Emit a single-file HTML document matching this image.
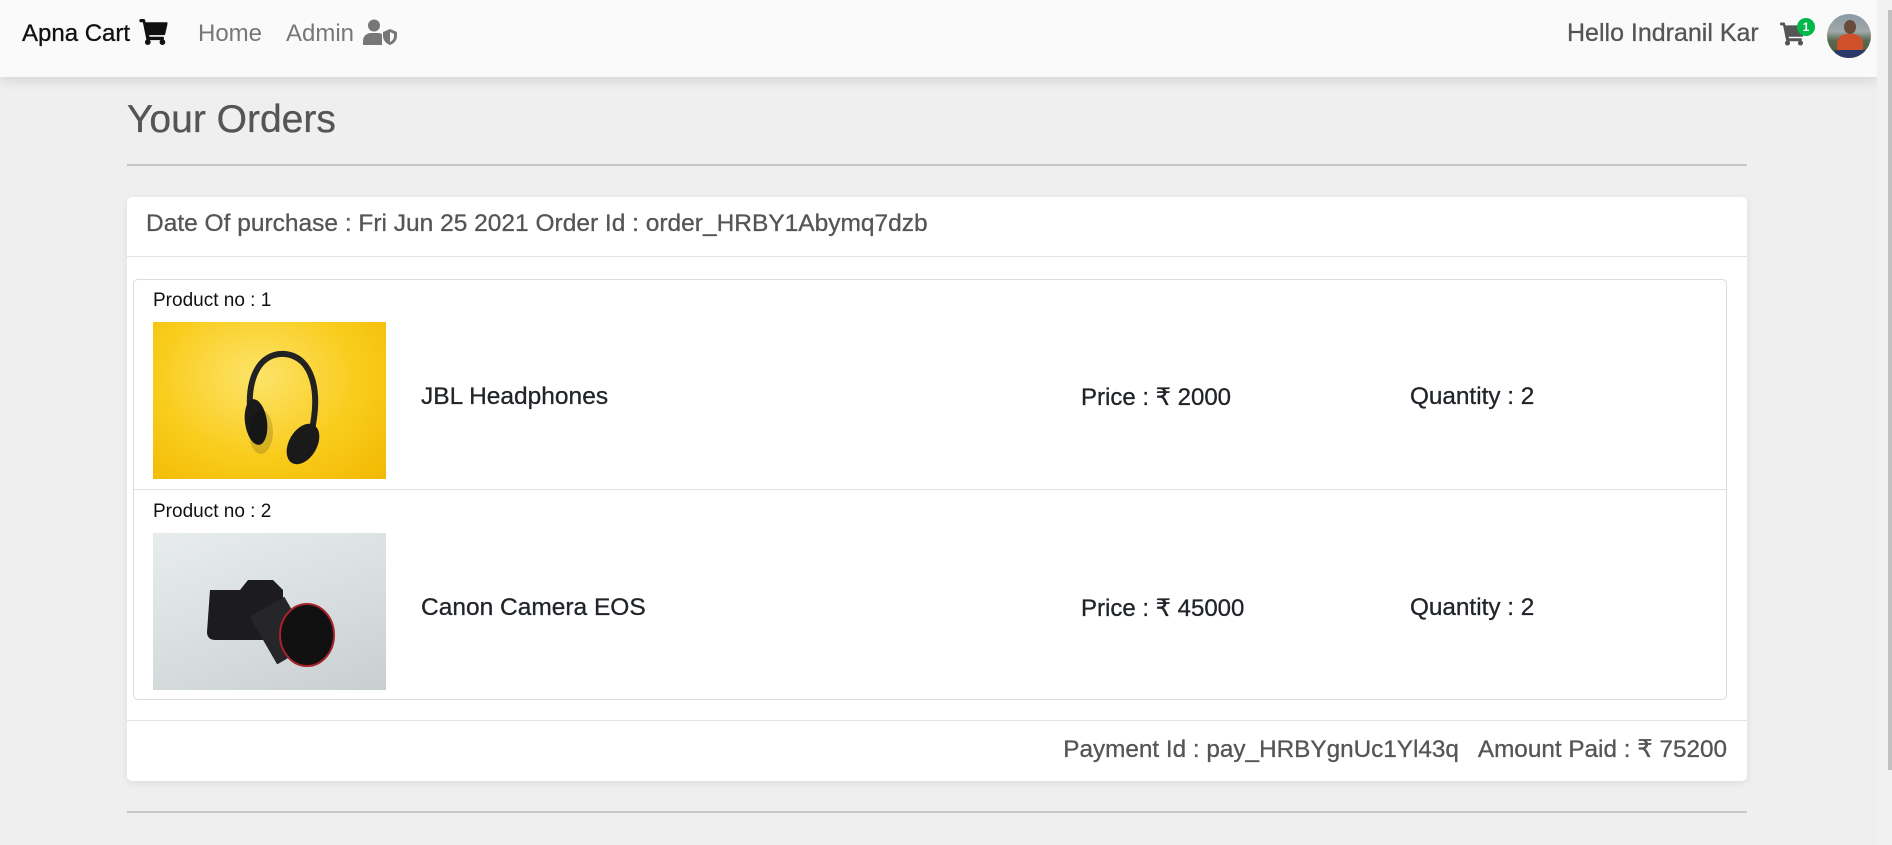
<!DOCTYPE html>
<html><head><meta charset="utf-8"><style>
*{margin:0;padding:0;box-sizing:border-box}
body{width:1892px;height:845px;background:#efefef;font-family:"Liberation Sans","DejaVu Sans",sans-serif;position:relative;overflow:hidden}
.a{position:absolute;white-space:nowrap}
.nav{position:absolute;left:0;top:0;width:1877px;height:77px;background:#fafafa;box-shadow:0 3px 12px rgba(0,0,0,.12)}
.sb{position:absolute;left:1877px;top:0;width:15px;height:845px;background:#f1f1f1}
.sb div{position:absolute;left:11px;top:10px;width:4px;height:760px;background:#c1c1c1}
.card{position:absolute;left:127px;top:197px;width:1620px;height:584px;background:#fff;border-radius:5px;box-shadow:0 2px 8px rgba(0,0,0,.08)}
.t{color:#212529;font-size:24.5px;-webkit-text-stroke:.3px #212529}
.g{color:#555;-webkit-text-stroke:.3px #555}
</style></head><body>
<div class="nav">
 <div class="a" style="left:22px;top:20px;font-size:24px;color:#111;-webkit-text-stroke:.3px #111">Apna Cart</div>
 <svg class="a" style="left:139px;top:19px" width="30" height="26" viewBox="0 0 576 512"><path fill="#111" d="M528 64H122L112 20C109 8 99 0 87 0H24C11 0 0 11 0 24v16c0 13 11 24 24 24h44l70 343c-17 10-28 28-28 49 0 31 25 56 56 56s56-25 56-56c0-15-6-29-17-39h210c-10 10-17 24-17 39 0 31 25 56 56 56s56-25 56-56c0-22-13-41-31-50l6-27c3-15-8-29-23-29H199l-7-32h293c11 0 21-8 24-19l46-208c3-15-8-29-23-29z"/></svg>
 <div class="a" style="left:198px;top:20px;font-size:24px;color:#777">Home</div>
 <div class="a" style="left:286px;top:20px;font-size:24px;color:#777">Admin</div>
 <svg class="a" style="left:363px;top:19px" width="34" height="26" viewBox="0 0 34 26"><circle cx="11" cy="6.5" r="6" fill="#777"/><path d="M0 26v-4c0-5 4-8 8-8h7c2 0 3 .5 4 1v11z" fill="#777"/><path d="M20 13l7-3 7 3v4c0 5-4 8-7 9-3-1-7-4-7-9z" fill="#777"/><path d="M27 13v10c2-1 4-3 4-6v-2z" fill="#fafafa"/></svg>
 <div class="a" style="left:1567px;top:19px;font-size:25px;color:#555;-webkit-text-stroke:.3px #555">Hello Indranil Kar</div>
 <svg class="a" style="left:1780px;top:22px" width="26" height="24" viewBox="0 0 576 512"><path fill="#555" d="M528 64H122L112 20C109 8 99 0 87 0H24C11 0 0 11 0 24v16c0 13 11 24 24 24h44l70 343c-17 10-28 28-28 49 0 31 25 56 56 56s56-25 56-56c0-15-6-29-17-39h210c-10 10-17 24-17 39 0 31 25 56 56 56s56-25 56-56c0-22-13-41-31-50l6-27c3-15-8-29-23-29H199l-7-32h293c11 0 21-8 24-19l46-208c3-15-8-29-23-29z"/></svg>
 <div class="a" style="left:1797px;top:18px;width:18px;height:18px;border-radius:50%;background:#00b74a;color:#fff;font-size:12px;font-weight:bold;text-align:center;line-height:18px">1</div>
 <div class="a" style="left:1827px;top:14px;width:44px;height:44px;border-radius:50%;overflow:hidden;background:linear-gradient(#8a9aa8 0,#a0a8a8 40%,#5a6a50 60%,#4a5a40 100%)">
  <div class="a" style="left:17px;top:6px;width:12px;height:14px;border-radius:50%;background:#6a4a3a"></div>
  <div class="a" style="left:10px;top:20px;width:26px;height:24px;border-radius:10px 10px 0 0;background:#d0502a"></div>
  <div class="a" style="left:8px;top:36px;width:30px;height:10px;background:#2a3a6a"></div>
 </div>
</div>
<div class="sb"><div></div></div>
<div class="a g" style="left:127px;top:98px;font-size:39px">Your Orders</div>
<div class="a" style="left:127px;top:164px;width:1620px;height:2px;background:#c8c8c8"></div>
<div class="card">
 <div class="a g" style="left:19px;top:13px;font-size:24.5px">Date Of purchase : Fri Jun 25 2021 Order Id : order_HRBY1Abymq7dzb</div>
 <div class="a" style="left:0;top:59px;width:1620px;height:1px;background:#e2e2e2"></div>
 <div class="a" style="left:6px;top:82px;width:1594px;height:421px;border:1px solid #dcdcdc;border-radius:5px">
  <div class="a" style="left:0;top:209px;width:1592px;height:1px;background:#e2e2e2"></div>
 </div>
 <div class="a" style="left:26px;top:93px;font-size:19px;color:#111">Product no : 1</div>
 <div class="a" style="left:26px;top:125px;width:233px;height:157px;overflow:hidden;background:radial-gradient(ellipse at 45% 35%,#fde36a 0,#f9cc1c 55%,#f2b800 100%)">
  <svg width="233" height="157" viewBox="0 0 233 157"><path d="M100 108C90 60 105 30 132 32 160 35 168 70 158 112" fill="none" stroke="#222" stroke-width="6"/><ellipse cx="103" cy="100" rx="11" ry="23" fill="#1a1a1a" transform="rotate(-8 103 100)"/><ellipse cx="150" cy="122" rx="14" ry="22" fill="#1a1a1a" transform="rotate(30 150 122)"/><ellipse cx="108" cy="110" rx="12" ry="22" fill="rgba(0,0,0,.15)"/></svg>
 </div>
 <div class="a t" style="left:294px;top:186px">JBL Headphones</div>
 <div class="a t" style="left:954px;top:186px;font-size:24px">Price : ₹ 2000</div>
 <div class="a t" style="left:1283px;top:186px;font-size:24.3px">Quantity : 2</div>
 <div class="a" style="left:26px;top:304px;font-size:19px;color:#111">Product no : 2</div>
 <div class="a" style="left:26px;top:336px;width:233px;height:157px;overflow:hidden;background:linear-gradient(160deg,#e8eced 0,#d6dcdd 60%,#c8cfd0 100%)">
  <svg width="233" height="157" viewBox="0 0 233 157"><path d="M57 57h30l8-10h25l10 10v50H62c-5 0-8-3-8-8z" fill="#1c1c1e"/><rect x="108" y="70" width="40" height="55" fill="#262628" transform="rotate(-30 128 98)"/><ellipse cx="154" cy="102" rx="27" ry="31" fill="#111"/><ellipse cx="154" cy="102" rx="27" ry="31" fill="none" stroke="#a8222a" stroke-width="2"/></svg>
 </div>
 <div class="a t" style="left:294px;top:397px">Canon Camera EOS</div>
 <div class="a t" style="left:954px;top:397px;font-size:24px">Price : ₹ 45000</div>
 <div class="a t" style="left:1283px;top:397px;font-size:24.3px">Quantity : 2</div>
 <div class="a" style="left:0;top:523px;width:1620px;height:1px;background:#e2e2e2"></div>
 <div class="a g" style="right:20px;top:537px;font-size:24.3px">Payment Id : pay_HRBYgnUc1Yl43q&nbsp;&nbsp; Amount Paid : ₹ 75200</div>
</div>
<div class="a" style="left:127px;top:811px;width:1620px;height:2px;background:#c8c8c8"></div>
</body></html>
